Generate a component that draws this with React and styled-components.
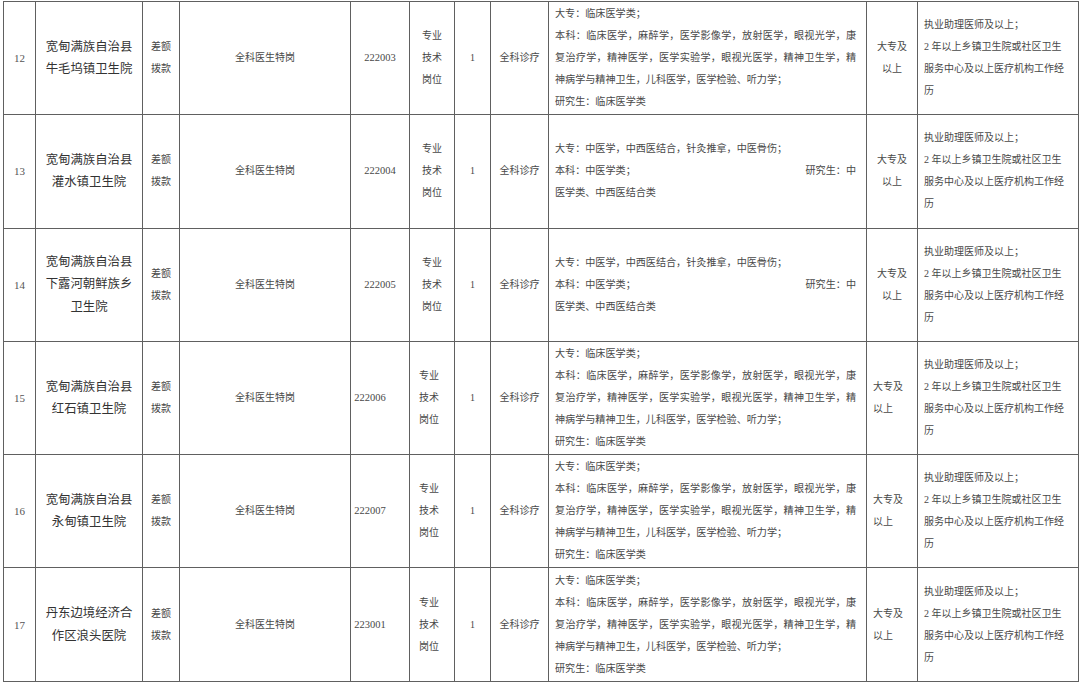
import React from 'react'
import styled, { createGlobalStyle } from 'styled-components'

const GlobalStyle = createGlobalStyle`
  html, body {
    margin: 0;
    padding: 0;
    background: #ffffff;
  }
  body {
    font-family: "Liberation Serif", "Noto Sans CJK SC", serif;
    color: #444444;
  }
`

const COLS = [32, 107, 37, 171, 59, 45, 36, 58, 318, 51, 161]

const CLINICAL = [
  { text: '大专：临床医学类；' },
  { text: '本科：临床医学，麻醉学，医学影像学，放射医学，眼视光学，康', full: true },
  { text: '复治疗学，精神医学，医学实验学，眼视光医学，精神卫生学，精', full: true },
  { text: '神病学与精神卫生，儿科医学，医学检验、听力学；' },
  { text: '研究生：临床医学类' },
]

const TCM = [
  { text: '大专：中医学，中西医结合，针灸推拿，中医骨伤；' },
  { split: ['本科：中医学类；', '研究生：中'] },
  { text: '医学类、中西医结合类' },
]

const EXPERIENCE = [
  '执业助理医师及以上；',
  '2 年以上乡镇卫生院或社区卫生',
  '服务中心及以上医疗机构工作经',
  '历',
]

const rows = [
  { no: 12, unit: ['宽甸满族自治县', '牛毛坞镇卫生院'], code: '222003', req: CLINICAL },
  { no: 13, unit: ['宽甸满族自治县', '灌水镇卫生院'], code: '222004', req: TCM },
  { no: 14, unit: ['宽甸满族自治县', '下露河朝鲜族乡', '卫生院'], code: '222005', req: TCM },
  { no: 15, unit: ['宽甸满族自治县', '红石镇卫生院'], code: '222006', req: CLINICAL, shifted: true },
  { no: 16, unit: ['宽甸满族自治县', '永甸镇卫生院'], code: '222007', req: CLINICAL, shifted: true },
  { no: 17, unit: ['丹东边境经济合', '作区浪头医院'], code: '223001', req: CLINICAL, shifted: true },
]

const Table = styled.table`
  border-collapse: collapse;
  table-layout: fixed;
  width: 1075px;
  margin: 1px 0 0 3px;
`

const Col = styled.col`
  width: ${p => p.$w}px;
`

const Row = styled.tr`
  height: 113.3px;
`

const Cell = styled.td`
  border: 1px solid #606060;
  padding: 0;
  vertical-align: middle;
  text-align: center;
  font-size: 10px;
  line-height: 22px;
  color: #484848;
`

const NoCell = styled(Cell)`
  font-size: 11px;
  color: #555555;
`

const UnitCell = styled(Cell)`
  font-size: 12.4px;
  line-height: 22.5px;
  color: #333333;
`

const CodeCell = styled(Cell)`
  font-size: 10.5px;
  padding-right: ${p => (p.$shifted ? 20 : 0)}px;
`

const CategoryCell = styled(Cell)`
  padding-right: ${p => (p.$shifted ? 6 : 0)}px;
`

const EduCell = styled(Cell)`
  text-align: ${p => (p.$shifted ? 'left' : 'center')};
  padding-left: ${p => (p.$shifted ? 6 : 0)}px;
`

const ReqCell = styled(Cell)`
  text-align: left;
  padding: 0 10px 0 6px;
  font-size: 10.1px;
  line-height: 22px;
`

const ExpCell = styled(Cell)`
  text-align: left;
  padding: 0 4px 0 6px;
  line-height: 22px;
`

const Line = styled.div`
  white-space: nowrap;
`

const FullLine = styled.div`
  text-align: justify;
  text-align-last: justify;
  text-justify: inter-character;
`

const SplitLine = styled.div`
  display: flex;
  justify-content: space-between;
`

function Lines({ items }) {
  return items.map((t, i) => <Line key={i}>{t}</Line>)
}

function Requirement({ lines }) {
  return lines.map((l, i) => {
    if (l.split) {
      return (
        <SplitLine key={i}>
          <span>{l.split[0]}</span>
          <span>{l.split[1]}</span>
        </SplitLine>
      )
    }
    if (l.full) return <FullLine key={i}>{l.text}</FullLine>
    return <Line key={i}>{l.text}</Line>
  })
}

export default function App() {
  return (
    <>
      <GlobalStyle />
      <Table>
        <colgroup>
          {COLS.map((w, i) => <Col key={i} $w={w} />)}
        </colgroup>
        <tbody>
          {rows.map(r => (
            <Row key={r.no}>
              <NoCell>{r.no}</NoCell>
              <UnitCell><Lines items={r.unit} /></UnitCell>
              <Cell><Lines items={['差额', '拨款']} /></Cell>
              <Cell>全科医生特岗</Cell>
              <CodeCell $shifted={r.shifted}>{r.code}</CodeCell>
              <CategoryCell $shifted={r.shifted}><Lines items={['专业', '技术', '岗位']} /></CategoryCell>
              <Cell>1</Cell>
              <Cell>全科诊疗</Cell>
              <ReqCell><Requirement lines={r.req} /></ReqCell>
              <EduCell $shifted={r.shifted}><Lines items={['大专及', '以上']} /></EduCell>
              <ExpCell><Lines items={EXPERIENCE} /></ExpCell>
            </Row>
          ))}
        </tbody>
      </Table>
    </>
  )
}
